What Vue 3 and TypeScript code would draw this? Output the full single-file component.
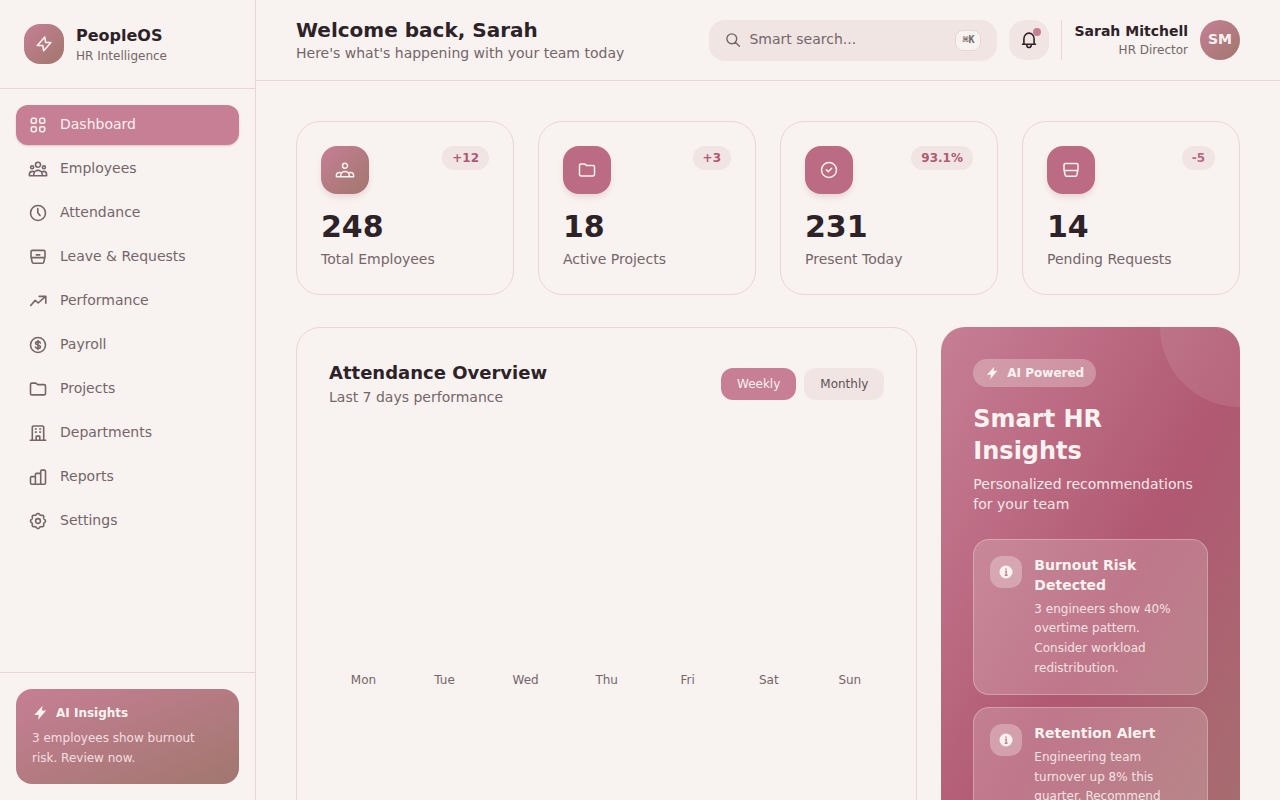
<script setup lang="ts">
import { ref } from 'vue'

interface NavItem { label: string; icon: string }
interface Stat { value: string; label: string; change: string; icon: string; tone: string; trend: string }
interface Insight { title: string; body: string }

function gearPath(): string {
  const steps = 96
  const points: string[] = []
  for (let i = 0; i < steps; i++) {
    const a = (i / steps) * Math.PI * 2
    const wave = Math.cos(8 * a)
    const r = 6.9 + 0.6 * Math.sign(wave) * Math.pow(Math.abs(wave), 0.7)
    points.push(`${(10 + r * Math.sin(a)).toFixed(2)} ${(10 - r * Math.cos(a)).toFixed(2)}`)
  }
  return `M${points.join('L')}z`
}

const bodies = 'M1.4 16.8H18.6M1.4 16.8v-1.3c0-2 1.4-3.1 3-3.1.6 0 1.100.1 1.600.3M18.600 16.800v-1.300c0-2-1.400-3.100-3-3.100-.6 0-1.100.1-1.600.3M5.800 16.800v-1.400a4.200 4 0 0 1 8.400 0v1.400'
const trayPath = 'M3 9.900V4.800c0-.8.6-1.400 1.400-1.400h11.200c.8 0 1.400.6 1.400 1.400v5.100c0 .4-.3.7-.7.7H3.700c-.4 0-.7-.3-.7-.7zM3.200 10.500l.9 4.400c.1.8.7 1.300 1.500 1.300h8.800c.8 0 1.400-.5 1.500-1.300l.9-4.400'

const icons: Record<string, string> = {
  grid: 'M4.900 3.300h1.800a1.600 1.600 0 0 1 1.600 1.600v1.800a1.600 1.600 0 0 1-1.600 1.600H4.900a1.600 1.600 0 0 1-1.600-1.600V4.900a1.600 1.600 0 0 1 1.600-1.600zM13.300 3.300h1.800a1.600 1.600 0 0 1 1.600 1.600v1.800a1.600 1.600 0 0 1-1.600 1.600h-1.800a1.600 1.600 0 0 1-1.600-1.600V4.900a1.600 1.600 0 0 1 1.600-1.600zM4.900 11.700h1.800a1.600 1.600 0 0 1 1.600 1.600v1.800a1.600 1.600 0 0 1-1.600 1.600H4.900a1.600 1.600 0 0 1-1.600-1.600v-1.800a1.600 1.600 0 0 1 1.600-1.600zM13.300 11.700h1.800a1.600 1.600 0 0 1 1.600 1.600v1.800a1.600 1.600 0 0 1-1.600 1.600h-1.800a1.600 1.600 0 0 1-1.600-1.600v-1.800a1.600 1.600 0 0 1 1.600-1.600z',
  people: `M10 3.200a2.500 2.500 0 1 1 0 5 2.500 2.500 0 0 1 0-5zM4.100 6.700a1.500 1.500 0 1 1 0 3 1.500 1.500 0 0 1 0-3zM15.900 6.700a1.500 1.500 0 1 1 0 3 1.500 1.500 0 0 1 0-3z${bodies}`,
  team: `M10 3.200a2.500 2.500 0 1 1 0 5 2.500 2.500 0 0 1 0-5z${bodies}`,
  clock: 'M10 2.500a7.500 7.500 0 1 1 0 15 7.500 7.500 0 0 1 0-15zM9.800 5.500v4.200l2.200 2.800',
  leave: `${trayPath}M8.300 7.900h3.400`,
  tray: trayPath,
  trend: 'M2.700 14.500 7.200 9.400 10.200 12 17.300 5.600M11.200 5.400h6.600v6.900',
  dollar: 'M10 2.500a7.500 7.500 0 1 1 0 15 7.500 7.500 0 0 1 0-15zM12.400 8c-.3-.9-1.200-1.400-2.400-1.400-1.400 0-2.400.6-2.400 1.700 0 1.100 1 1.400 2.400 1.700s2.400.6 2.400 1.700-1 1.700-2.400 1.700c-1.200 0-2.200-.5-2.500-1.400M10 5.600v8.800',
  folder: 'M2.500 14.500V5.500c0-.8.6-1.400 1.400-1.400h3.900l1.900 1.500h6.400c.8 0 1.400.6 1.400 1.400v7.500c0 .8-.6 1.400-1.400 1.400H3.900c-.8 0-1.400-.6-1.400-1.400z',
  building: 'M2.300 17.200h15.400M4.300 17.200V4.200c0-.7.5-1.200 1.200-1.200h9c.7 0 1.200.5 1.200 1.200v13M8.200 17.200v-3.500c0-.4.3-.6.6-.6h2.400c.3 0 .6.2.6.6v3.500M7.400 6h.9M11.700 6h.9M7.400 9.100h.9M11.700 9.100h.9',
  bars: 'M7.400 17.300H3.700c-.7 0-1.200-.5-1.200-1.200v-5.300c0-.7.5-1.200 1.200-1.200h3.700M12.700 17.300H7.400V7.600c0-.7.5-1.200 1.200-1.200h4.100M12.700 17.300V4.300c0-.7.5-1.200 1.200-1.200h2.400c.7 0 1.200.5 1.200 1.200v11.800c0 .7-.5 1.200-1.200 1.200z',
  gear: `${gearPath()}M10 7.600a2.400 2.400 0 1 1 0 4.800 2.400 2.400 0 0 1 0-4.800z`,
  check: 'M10 2.500a7.500 7.500 0 1 1 0 15 7.500 7.500 0 0 1 0-15zM7.300 9.900l1.900 1.900 3.500-3.600',
  bolt: 'M10.800 3 3.300 11.500h5.500l.9 5.300L16.900 8.500h-5.300z',
  bell: 'M3.500 14.300h13M4.900 14.300V8.700c0-3.200 2.400-5.600 5.100-5.600s5.100 2.400 5.100 5.600v5.600M7.800 14.800v.5a2.200 2.200 0 0 0 4.400 0v-.5',
}

const nav: NavItem[] = [
  { label: 'Dashboard', icon: 'grid' },
  { label: 'Employees', icon: 'people' },
  { label: 'Attendance', icon: 'clock' },
  { label: 'Leave & Requests', icon: 'leave' },
  { label: 'Performance', icon: 'trend' },
  { label: 'Payroll', icon: 'dollar' },
  { label: 'Projects', icon: 'folder' },
  { label: 'Departments', icon: 'building' },
  { label: 'Reports', icon: 'bars' },
  { label: 'Settings', icon: 'gear' },
]

const stats: Stat[] = [
  { value: '248', label: 'Total Employees', change: '+12', icon: 'team', tone: 'blend', trend: 'up' },
  { value: '18', label: 'Active Projects', change: '+3', icon: 'folder', tone: 'rose', trend: 'up' },
  { value: '231', label: 'Present Today', change: '93.1%', icon: 'check', tone: 'rose', trend: 'up' },
  { value: '14', label: 'Pending Requests', change: '-5', icon: 'tray', tone: 'rose', trend: 'down' },
]

const insights: Insight[] = [
  { title: 'Burnout Risk Detected', body: '3 engineers show 40% overtime pattern. Consider workload redistribution.' },
  { title: 'Retention Alert', body: 'Engineering team turnover up 8% this quarter. Recommend engagement survey.' },
]

const days: string[] = ['Mon', 'Tue', 'Wed', 'Thu', 'Fri', 'Sat', 'Sun']
const periods: string[] = ['Weekly', 'Monthly']

const activePage = ref('Dashboard')
const period = ref('Weekly')
const query = ref('')
</script>

<template>
  <div class="shell">
    <aside class="sidebar">
      <div class="brand">
        <div class="brand-mark">
          <svg class="icon" viewBox="0 0 20 20" aria-hidden="true"><path :d="icons.bolt" /></svg>
        </div>
        <div>
          <div class="brand-name">PeopleOS</div>
          <div class="small muted">HR Intelligence</div>
        </div>
      </div>

      <nav class="nav">
        <a
          v-for="item in nav"
          :key="item.label"
          href="#"
          class="nav-link"
          :class="{ active: item.label === activePage }"
          @click.prevent="activePage = item.label"
        >
          <svg class="icon" viewBox="0 0 20 20" aria-hidden="true"><path :d="icons[item.icon]" /></svg>
          <span>{{ item.label }}</span>
        </a>
      </nav>

      <div class="sidebar-foot">
        <div class="tip">
          <div class="tip-head">
            <svg class="bolt-fill" viewBox="0 0 16 16" aria-hidden="true"><path d="M10.600.8 2.200 10h4.600l-.8 5.100 8.100-9.600H9.700z" /></svg>
            <span>AI Insights</span>
          </div>
          <p class="tip-body">3 employees show burnout risk. Review now.</p>
        </div>
      </div>
    </aside>

    <div class="page">
      <header class="topbar">
        <div class="greeting">
          <h1>Welcome back, Sarah</h1>
          <p class="muted">Here's what's happening with your team today</p>
        </div>

        <div class="tools">
          <label class="search">
            <svg class="search-icon" viewBox="0 0 16 16" aria-hidden="true"><path d="M6.800 1.900a4.900 4.900 0 1 1 0 9.800 4.900 4.900 0 0 1 0-9.800zM10.300 10.300l4.100 4" /></svg>
            <input v-model="query" type="text" placeholder="Smart search..." aria-label="Smart search" />
            <kbd>⌘K</kbd>
          </label>

          <button class="bell" type="button" aria-label="Notifications">
            <svg class="icon" viewBox="0 0 20 20" aria-hidden="true"><path :d="icons.bell" /></svg>
            <span class="bell-dot"></span>
          </button>

          <div class="user">
            <div class="user-text">
              <div class="user-name">Sarah Mitchell</div>
              <div class="small muted">HR Director</div>
            </div>
            <div class="avatar">SM</div>
          </div>
        </div>
      </header>

      <main class="content">
        <section class="stats">
          <article v-for="stat in stats" :key="stat.label" class="stat">
            <div class="stat-top">
              <div class="stat-icon" :class="stat.tone">
                <svg class="icon thin" viewBox="0 0 20 20" aria-hidden="true"><path :d="icons[stat.icon]" /></svg>
              </div>
              <span class="change" :class="stat.trend">{{ stat.change }}</span>
            </div>
            <div class="stat-value">{{ stat.value }}</div>
            <div class="stat-label muted">{{ stat.label }}</div>
          </article>
        </section>

        <section class="panels">
          <article class="chart-card">
            <div class="chart-head">
              <div>
                <h2>Attendance Overview</h2>
                <p class="muted">Last 7 days performance</p>
              </div>
              <div class="periods">
                <button
                  v-for="name in periods"
                  :key="name"
                  type="button"
                  class="period"
                  :class="{ active: name === period }"
                  @click="period = name"
                >{{ name }}</button>
              </div>
            </div>
            <div class="chart">
              <div v-for="day in days" :key="day" class="chart-day small muted">{{ day }}</div>
            </div>
          </article>

          <article class="ai-card">
            <span class="ai-orb"></span>
            <span class="chip">
              <svg class="chip-icon" viewBox="0 0 16 16" aria-hidden="true"><path d="M10.600.8 2.200 10h4.600l-.8 5.100 8.100-9.600H9.700z" /></svg>
              AI Powered
            </span>
            <h2 class="ai-title">Smart HR Insights</h2>
            <p class="ai-lead">Personalized recommendations for your team</p>
            <div class="insights">
              <div v-for="insight in insights" :key="insight.title" class="insight">
                <div class="insight-icon">
                  <svg viewBox="0 0 16 16" aria-hidden="true">
                    <circle cx="8" cy="8" r="6.500" />
                    <path d="M8 4.600v1.300M6.900 7.500h1.300v3.600M6.700 11.200h2.900" />
                  </svg>
                </div>
                <div>
                  <h3>{{ insight.title }}</h3>
                  <p>{{ insight.body }}</p>
                </div>
              </div>
            </div>
          </article>
        </section>
      </main>
    </div>
  </div>
</template>

<style>
body {
  margin: 0;
  background: #f8f3f0;
}
</style>

<style scoped>
.shell {
  --cream: #f8f3f0;
  --blush: #f0e5e3;
  --line: #ebd5d6;
  --ink: #2d2228;
  --soft: #75656a;
  --pink: #c67f95;
  --rose: #b15872;
  --clay: #a1776e;
  display: flex;
  height: 100vh;
  overflow: hidden;
  background: var(--cream);
  color: var(--ink);
  font-family: "DejaVu Sans", sans-serif;
  font-size: 14px;
  line-height: 1.42857;
}

.shell *,
.shell *::before {
  box-sizing: border-box;
}

h1, h2, h3, p {
  margin: 0;
}

.muted {
  color: var(--soft);
}

.small {
  font-size: 12px;
  line-height: 16px;
}

.icon {
  width: 20px;
  height: 20px;
  flex: none;
  fill: none;
  stroke: currentColor;
  stroke-width: 1.6;
  stroke-linecap: round;
  stroke-linejoin: round;
}

.icon.thin {
  stroke-width: 1.5;
}

/* Sidebar */
.sidebar {
  display: flex;
  flex-direction: column;
  flex: none;
  width: 256px;
  border-right: 1px solid var(--line);
}

.brand {
  display: flex;
  align-items: center;
  gap: 12px;
  padding: 24px;
  border-bottom: 1px solid var(--line);
}

.brand-mark {
  display: grid;
  place-items: center;
  width: 40px;
  height: 40px;
  border-radius: 16px;
  background: linear-gradient(to bottom right, var(--pink), var(--clay));
  color: var(--cream);
}

.brand-name {
  font-size: 16px;
  font-weight: 700;
  line-height: 24px;
}

.nav {
  display: flex;
  flex: 1;
  flex-direction: column;
  gap: 4px;
  padding: 16px;
}

.nav-link {
  display: flex;
  align-items: center;
  gap: 12px;
  height: 40px;
  padding: 0 12px;
  border-radius: 12px;
  color: var(--soft);
  text-decoration: none;
}

.nav-link.active {
  background: var(--pink);
  color: var(--cream);
  box-shadow: 0 1px 2px rgba(177, 88, 114, 0.3);
}

.sidebar-foot {
  padding: 16px;
  border-top: 1px solid var(--line);
}

.tip {
  padding: 16px;
  border-radius: 16px;
  background: linear-gradient(to bottom right, var(--pink), var(--clay));
  color: var(--cream);
  font-size: 12px;
}

.tip-head {
  display: flex;
  align-items: center;
  gap: 8px;
  margin-bottom: 8px;
  font-weight: 700;
  line-height: 16px;
}

.bolt-fill {
  width: 16px;
  height: 16px;
  fill: currentColor;
}

.tip-body {
  line-height: 1.625;
  color: #f3dfe1;
}

/* Top bar */
.page {
  display: flex;
  flex: 1;
  flex-direction: column;
  min-width: 0;
}

.topbar {
  display: flex;
  align-items: center;
  justify-content: space-between;
  flex: none;
  gap: 24px;
  min-height: 81px;
  padding: 16px 40px;
  border-bottom: 1px solid var(--line);
}

.greeting {
  align-self: flex-start;
}

h1 {
  font-size: 20px;
  line-height: 28px;
}

.tools {
  display: flex;
  align-items: center;
  gap: 12px;
}

.search {
  display: flex;
  align-items: center;
  gap: 8px;
  width: 288px;
  padding: 10px 16px;
  border-radius: 16px;
  background: var(--blush);
  color: var(--soft);
}

.search-icon {
  width: 16px;
  height: 16px;
  flex: none;
  fill: none;
  stroke: currentColor;
  stroke-width: 1.4;
  stroke-linecap: round;
}

.search input {
  flex: 1;
  min-width: 0;
  padding: 0;
  border: 0;
  outline: 0;
  background: none;
  color: var(--ink);
  font: inherit;
}

.search input::placeholder {
  color: var(--soft);
  opacity: 1;
}

kbd {
  padding: 1px 6px 3px;
  border: 1px solid var(--line);
  border-radius: 8px;
  background: var(--cream);
  font-family: "DejaVu Sans Mono", monospace;
  font-size: 10px;
  font-weight: 700;
  line-height: 15px;
}

.bell {
  position: relative;
  display: grid;
  place-items: center;
  width: 40px;
  height: 40px;
  padding: 0;
  border: 0;
  border-radius: 16px;
  background: var(--blush);
  color: var(--ink);
}

.bell-dot {
  position: absolute;
  top: 8px;
  right: 8px;
  width: 8px;
  height: 8px;
  border-radius: 50%;
  background: var(--pink);
}

.user {
  display: flex;
  align-items: center;
  gap: 12px;
  padding-left: 12px;
  border-left: 1px solid var(--line);
}

.user-text {
  text-align: right;
}

.user-name {
  font-weight: 700;
}

.avatar {
  display: grid;
  place-items: center;
  width: 40px;
  height: 40px;
  border-radius: 50%;
  background: linear-gradient(to bottom right, var(--pink), var(--clay));
  color: var(--cream);
  font-weight: 700;
}

/* Content */
.content {
  flex: 1;
  min-height: 0;
  padding: 40px;
  overflow-y: auto;
  scrollbar-width: none;
}

.stats {
  display: grid;
  grid-template-columns: repeat(4, 1fr);
  gap: 24px;
  margin-bottom: 32px;
}

.stat {
  padding: 24px;
  border: 1px solid var(--line);
  border-radius: 24px;
}

.stat-top {
  display: flex;
  align-items: flex-start;
  justify-content: space-between;
  margin-bottom: 16px;
}

.stat-icon {
  display: grid;
  place-items: center;
  width: 48px;
  height: 48px;
  border-radius: 16px;
  color: var(--cream);
  box-shadow: 0 4px 6px -1px rgba(177, 88, 114, 0.2);
}

.stat-icon.blend {
  background: linear-gradient(to bottom right, var(--pink), var(--clay));
}

.stat-icon.rose {
  background: #bb6b83;
}

.change {
  padding: 4px 10px;
  border-radius: 12px;
  background: var(--blush);
  color: var(--rose);
  font-size: 12px;
  font-weight: 700;
  line-height: 16px;
}

.change.down {
  color: #bb6b83;
}

.stat-value {
  margin-bottom: 6px;
  font-size: 30px;
  font-weight: 700;
  line-height: 34px;
}

.panels {
  display: grid;
  grid-template-columns: repeat(3, 1fr);
  gap: 24px;
}

.chart-card {
  grid-column: span 2;
  padding: 32px;
  border: 1px solid var(--line);
  border-radius: 24px;
}

.chart-head {
  display: flex;
  align-items: center;
  justify-content: space-between;
  margin-bottom: 24px;
}

.chart-head h2 {
  margin-bottom: 2px;
  font-size: 18px;
  line-height: 26px;
}

.periods {
  display: flex;
  gap: 8px;
}

.period {
  padding: 8px 16px;
  border: 0;
  border-radius: 12px;
  background: var(--blush);
  color: #5f5056;
  font-family: inherit;
  font-size: 12px;
  line-height: 16px;
}

.period.active {
  background: var(--pink);
  color: var(--cream);
}

.chart {
  display: grid;
  grid-template-columns: repeat(7, 1fr);
  align-items: end;
  gap: 12px;
  height: 256px;
}

.chart-day {
  text-align: center;
}

/* AI panel */
.ai-card {
  position: relative;
  padding: 32px;
  overflow: hidden;
  border-radius: 24px;
  background: linear-gradient(to bottom right, var(--pink), var(--rose) 54%, var(--clay) 112%);
  color: var(--cream);
}

.ai-orb {
  position: absolute;
  top: -80px;
  right: -80px;
  width: 160px;
  height: 160px;
  border-radius: 50%;
  background: rgba(248, 243, 240, 0.1);
}

.chip {
  display: flex;
  align-items: center;
  gap: 8px;
  width: fit-content;
  margin-bottom: 16px;
  padding: 6px 12px;
  border-radius: 14px;
  background: rgba(248, 243, 240, 0.3);
  font-size: 12px;
  font-weight: 700;
  line-height: 16px;
}

.chip-icon {
  width: 14px;
  height: 14px;
  fill: currentColor;
}

.ai-title {
  margin-bottom: 8px;
  font-size: 24px;
  line-height: 32px;
}

.ai-lead {
  margin-bottom: 24px;
  color: #f5e8e8;
}

.insights {
  display: grid;
  gap: 12px;
}

.insight {
  display: flex;
  gap: 12px;
  padding: 16px;
  border: 1px solid rgba(248, 243, 240, 0.3);
  border-radius: 16px;
  background: rgba(248, 243, 240, 0.2);
}

.insight-icon {
  display: grid;
  place-items: center;
  flex: none;
  width: 32px;
  height: 32px;
  border-radius: 12px;
  background: rgba(248, 243, 240, 0.32);
}

.insight-icon svg {
  width: 16px;
  height: 16px;
}

.insight-icon circle {
  fill: var(--cream);
}

.insight-icon path {
  fill: none;
  stroke: var(--pink);
  stroke-width: 1.4;
}

.insight h3 {
  margin-bottom: 4px;
  font-size: 14px;
  line-height: 1.42857;
}

.insight p {
  color: #f3e2e3;
  font-size: 12px;
  line-height: 1.63;
}
</style>
